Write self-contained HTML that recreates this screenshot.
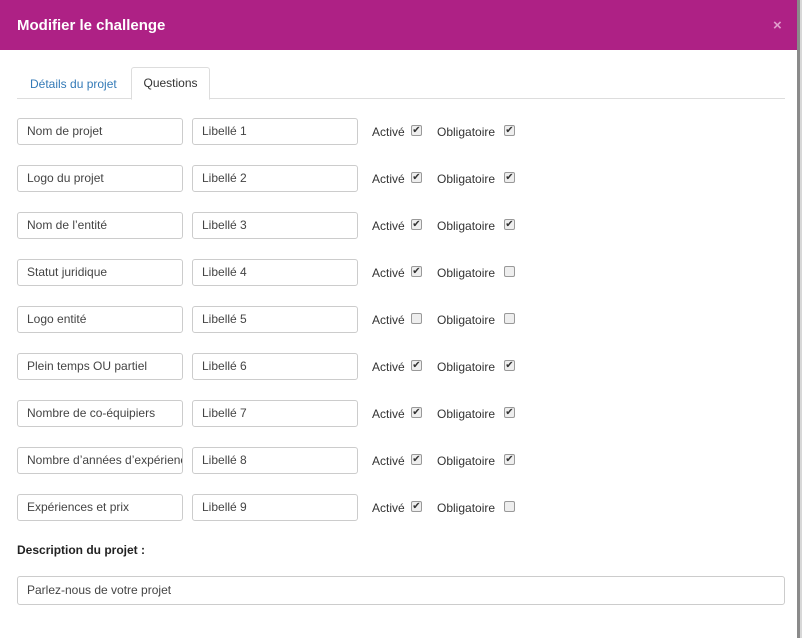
<!DOCTYPE html>
<html><head><style>
body{margin:0;width:802px;height:638px;background:#fff;font-family:"Liberation Sans",Arial,sans-serif;position:relative;overflow:hidden;font-size:12px;color:#333}
.hdr{position:absolute;left:0;top:0;width:797px;height:50px;background:#ae2185;}
.hdr h1{margin:0;position:absolute;left:17px;top:17px;font-size:15px;color:#fff;font-weight:bold}
.x{position:absolute;left:773px;top:17px;color:#e09ccc;font-weight:bold;font-size:15px}
.edge{position:absolute;left:797px;top:0;width:3px;height:638px;background:#8a8a8a}
.edge3{position:absolute;left:800px;top:0;width:2px;height:638px;background:#d8d8d8}
.tabline{position:absolute;left:17px;top:98px;width:768px;height:1px;background:#ddd}
.t1{position:absolute;left:30px;top:77px;color:#337ab7}
.t2{position:absolute;left:131px;top:67px;width:77px;height:31px;border:1px solid #ddd;border-bottom:1px solid #fff;background:#fff;text-align:center;line-height:31px;border-radius:3px 3px 0 0}
.in{position:absolute;height:27px;border:1px solid #ccc;border-radius:3px;box-sizing:border-box;padding-left:9px;line-height:25px;white-space:nowrap;overflow:hidden;color:#444}
.lb{position:absolute}
.cb{position:absolute;width:11px;height:11px;border:1px solid #999;border-radius:2px;background:#eee;box-sizing:border-box;font-size:10px;line-height:9px;text-align:center;color:#333}
</style></head><body>
<div class="hdr"><h1>Modifier le challenge</h1><span class="x">×</span></div>
<div class="edge"></div><div class="edge3"></div>
<div class="tabline"></div>
<div class="t1">Détails du projet</div>
<div class="t2">Questions</div>
<div id="rows"></div>
<div style="position:absolute;left:17px;top:543px;font-weight:bold;color:#222">Description du projet :</div>
<div class="in" style="left:17px;top:576px;width:768px;height:29px;line-height:27px">Parlez-nous de votre projet</div>
<script>
var n=["Nom de projet","Logo du projet","Nom de l’entité","Statut juridique","Logo entité","Plein temps OU partiel","Nombre de co-équipiers","Nombre d’années d’expérience","Expériences et prix"];
var a=[1,1,1,1,0,1,1,1,1],o=[1,1,1,0,0,1,1,1,0],h="";
for(var i=0;i<9;i++){var y=118+i*47;
h+='<div class="in" style="left:17px;top:'+y+'px;width:166px">'+n[i]+'</div>';
h+='<div class="in" style="left:192px;top:'+y+'px;width:166px">Libellé '+(i+1)+'</div>';
h+='<div class="lb" style="left:372px;top:'+(y+7)+'px">Activé</div>';
h+='<div class="cb" style="left:411px;top:'+(y+7)+'px">'+(a[i]?'✔':'')+'</div>';
h+='<div class="lb" style="left:437px;top:'+(y+7)+'px">Obligatoire</div>';
h+='<div class="cb" style="left:504px;top:'+(y+7)+'px">'+(o[i]?'✔':'')+'</div>';}
document.getElementById("rows").innerHTML=h;
</script>
</body></html>
